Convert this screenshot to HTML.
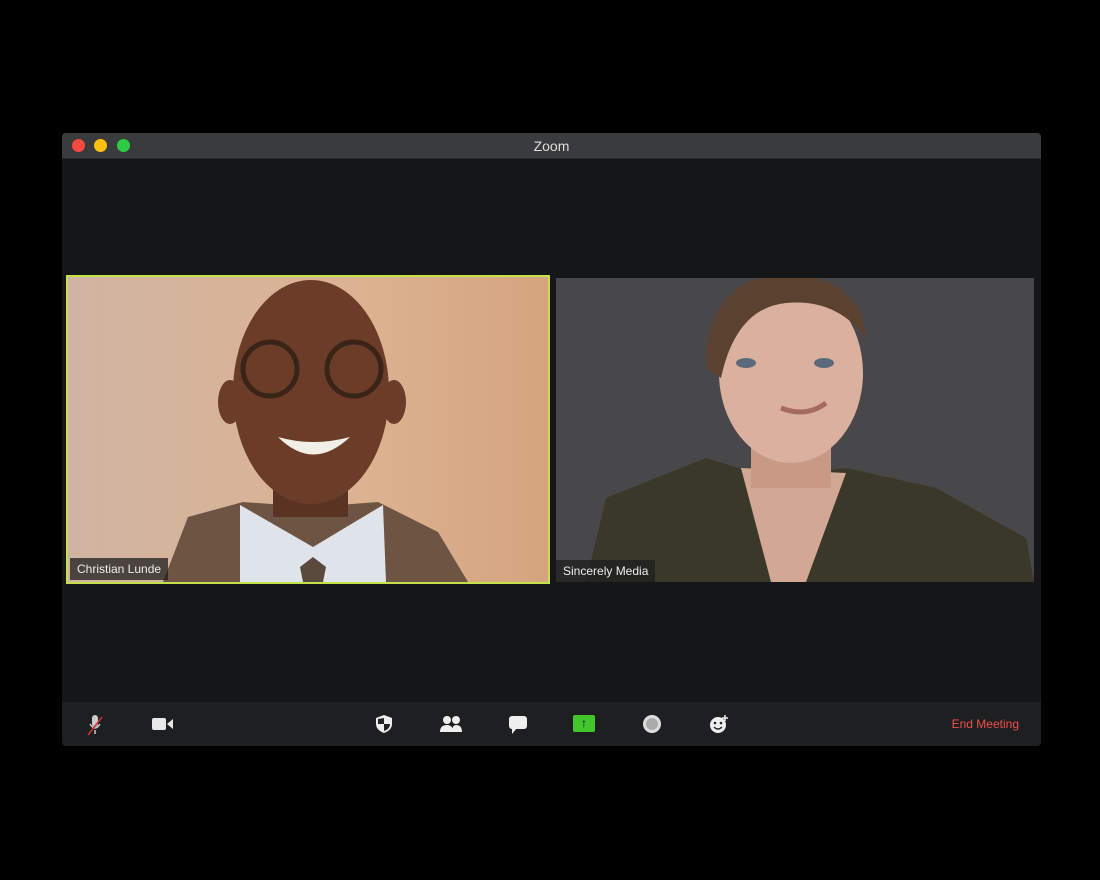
<!DOCTYPE html>
<html><head><style>
body{margin:0;width:1100px;height:880px;background:#000;position:relative;overflow:hidden;font-family:"Liberation Sans",sans-serif}
.win{position:absolute;left:62px;top:133px;width:979px;height:613px;background:#151618;border-radius:4px;overflow:hidden}
.title{position:absolute;left:0;top:0;width:100%;height:25px;background:#3a3b3d;border-bottom:1px solid #2a2a2c;color:#ddd;font-size:14px;text-align:center;line-height:26px}
.dot{position:absolute;top:6px;width:13px;height:13px;border-radius:50%}
.tb{position:absolute;left:0;top:569px;width:100%;height:44px;background:#1d1f21}
.lbl{position:absolute;bottom:0;background:rgba(30,30,30,.75);color:#eee;font-size:12px;padding:4px 7px}
.ico{position:absolute;top:12px}
</style></head><body>
<div class="win">
<div class="title">Zoom
<div class="dot" style="left:10px;background:#fb4a3f"></div>
<div class="dot" style="left:32px;background:#fdc10a"></div>
<div class="dot" style="left:55px;background:#2dcb46"></div>
</div>
<div style="position:absolute;left:4px;top:142px;width:480px;height:305px;border:2px solid #c5e14a;overflow:hidden">
<svg width="480" height="305" viewBox="0 0 480 305">
<defs><linearGradient id="bg1" x1="0" x2="1"><stop offset="0" stop-color="#d0b4a2"/><stop offset=".6" stop-color="#dcb392"/><stop offset="1" stop-color="#d4a47e"/></linearGradient></defs>
<rect width="480" height="305" fill="url(#bg1)"/>
<path d="M95 305 L120 240 L175 225 L245 230 L310 225 L370 255 L400 305Z" fill="#6e5443"/>
<path d="M172 228 L245 270 L315 228 L318 305 L172 305Z" fill="#dfe4ea"/>
<path d="M232 290 L245 280 L258 290 L255 305 L235 305Z" fill="#5a4a3e"/>
<rect x="205" y="180" width="75" height="60" fill="#5a3322"/>
<ellipse cx="243" cy="115" rx="78" ry="112" fill="#6b3c27"/>
<ellipse cx="162" cy="125" rx="12" ry="22" fill="#6b3c27"/>
<ellipse cx="326" cy="125" rx="12" ry="22" fill="#6b3c27"/>
<circle cx="202" cy="92" r="27" fill="none" stroke="#3a2418" stroke-width="5"/>
<circle cx="286" cy="92" r="27" fill="none" stroke="#3a2418" stroke-width="5"/>
<path d="M210 160 Q245 195 282 160 Q245 170 210 160Z" fill="#f2eee8"/>
</svg>
<div class="lbl" style="left:2px;bottom:2px">Christian Lunde</div>
</div>
<div style="position:absolute;left:494px;top:145px;width:478px;height:304px;overflow:hidden">
<svg width="478" height="304" viewBox="0 0 478 304">
<rect width="478" height="304" fill="#48484a"/>
<path d="M30 304 L50 220 L150 180 L215 200 L290 190 L380 210 L470 260 L478 304Z" fill="#3a3828"/>
<path d="M185 190 L215 304 L250 304 L290 195Z" fill="#d2a895"/>
<rect x="195" y="140" width="80" height="70" fill="#c89a86"/>
<ellipse cx="235" cy="95" rx="72" ry="90" fill="#dab09e"/>
<path d="M150 90 Q150 0 230 -5 Q305 0 310 60 Q280 20 230 25 Q180 30 165 100Z" fill="#5b4230"/>
<ellipse cx="190" cy="85" rx="10" ry="5" fill="#5b6a7a"/>
<ellipse cx="268" cy="85" rx="10" ry="5" fill="#5b6a7a"/>
<path d="M225 130 Q250 140 270 125" stroke="#a66a63" stroke-width="5" fill="none"/>
</svg>
<div class="lbl">Sincerely Media</div>
</div>
<div class="tb">
<svg class="ico" style="left:25px" width="16" height="22" viewBox="0 0 16 22"><rect x="5" y="1" width="6" height="12" rx="3" fill="#ccc"/><path d="M3 10 Q8 18 13 10M8 16V20" stroke="#ccc" fill="none" stroke-width="1.5"/><path d="M1 21 L15 3" stroke="#c33" stroke-width="1.5"/></svg>
<svg class="ico" style="left:90px;top:15px" width="22" height="14"><rect x="0" y="1" width="14" height="12" rx="2" fill="#e8e8e8"/><path d="M15 7 L21 2 V12Z" fill="#e8e8e8"/></svg>
<svg class="ico" style="left:313px" width="18" height="20"><path d="M9 1 L17 4 V10 Q17 16 9 19 Q1 16 1 10 V4Z" fill="#eee"/><path d="M9 4 V10 H3 V5Z M9 10 H15 Q15 15 9 17Z" fill="#222"/></svg>
<svg class="ico" style="left:378px;top:13px" width="22" height="18"><circle cx="7" cy="5" r="4" fill="#eee"/><circle cx="16" cy="5" r="4" fill="#eee"/><path d="M0 17 Q0 10 7 10 Q13 10 13 17Z M12 17 Q12 10 16 10 Q22 10 22 17Z" fill="#eee"/></svg>
<svg class="ico" style="left:446px;top:13px" width="20" height="20"><rect x="1" y="1" width="18" height="13" rx="3" fill="#eee"/><path d="M4 13 L4 19 L9 13Z" fill="#eee"/></svg>
<div class="ico" style="left:511px;top:13px;width:22px;height:17px;background:#43c52c;border-radius:2px;color:#112;font-size:12px;text-align:center;line-height:17px;font-weight:bold">↑</div>
<svg class="ico" style="left:580px;top:12px" width="20" height="20"><circle cx="10" cy="10" r="9" fill="#ddd"/><circle cx="10" cy="10" r="6" fill="#aaa"/></svg>
<svg class="ico" style="left:647px;top:12px" width="20" height="20"><circle cx="9" cy="11" r="8" fill="#eee"/><circle cx="6" cy="9" r="1.3" fill="#222"/><circle cx="12" cy="9" r="1.3" fill="#222"/><path d="M5 13 Q9 17 13 13" stroke="#222" fill="none" stroke-width="1.3"/><path d="M16 1V7M13 4H19" stroke="#eee" stroke-width="1.5"/></svg>
<div style="position:absolute;right:22px;top:15px;color:#ee4f4a;font-size:12px">End Meeting</div>
</div>
</div>
</body></html>
